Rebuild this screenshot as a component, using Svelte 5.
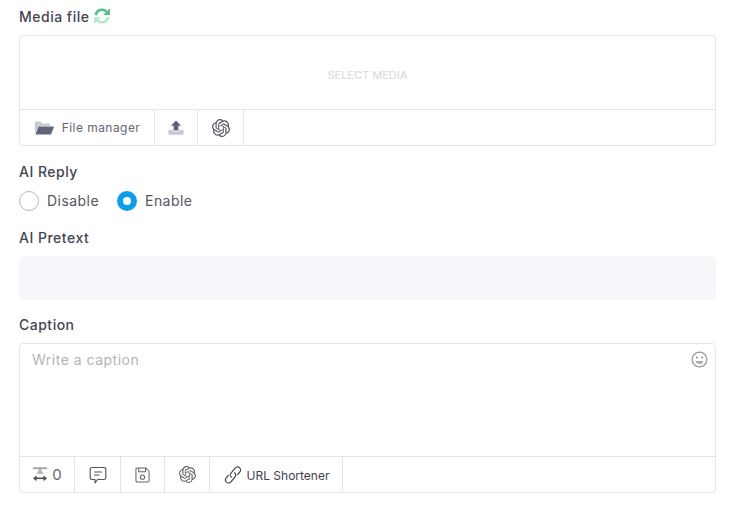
<script>
  const openai = "M22.2819 9.8211a5.9847 5.9847 0 0 0-.5157-4.9108 6.0462 6.0462 0 0 0-6.5098-2.9A6.0651 6.0651 0 0 0 4.9807 4.1818a5.9847 5.9847 0 0 0-3.9977 2.9 6.0462 6.0462 0 0 0 .7427 7.0966 5.98 5.98 0 0 0 .511 4.9107 6.051 6.051 0 0 0 6.5146 2.9001A5.9847 5.9847 0 0 0 13.2599 24a6.0557 6.0557 0 0 0 5.7718-4.2058 5.9894 5.9894 0 0 0 3.9977-2.9001 6.0557 6.0557 0 0 0-.7475-7.0729zm-9.022 12.6081a4.4755 4.4755 0 0 1-2.8764-1.0408l.1419-.0804 4.7783-2.7582a.7948.7948 0 0 0 .3927-.6813v-6.7369l2.02 1.1686a.071.071 0 0 1 .038.052v5.5826a4.504 4.504 0 0 1-4.4945 4.4944zm-9.6607-4.1254a4.4708 4.4708 0 0 1-.5346-3.0137l.142.0852 4.783 2.7582a.7712.7712 0 0 0 .7806 0l5.8428-3.3685v2.3324a.0804.0804 0 0 1-.0332.0615L9.74 19.9502a4.4992 4.4992 0 0 1-6.1408-1.6464zM2.3408 7.8956a4.485 4.485 0 0 1 2.3655-1.9728V11.6a.7664.7664 0 0 0 .3879.6765l5.8144 3.3543-2.0201 1.1685a.0757.0757 0 0 1-.071 0l-4.8303-2.7865A4.504 4.504 0 0 1 2.3408 7.872zm16.5963 3.8558L13.1038 8.364 15.1192 7.2a.0757.0757 0 0 1 .071 0l4.8303 2.7913a4.4944 4.4944 0 0 1-.6765 8.1042v-5.6772a.79.79 0 0 0-.407-.667zm2.0107-3.0231l-.142-.0852-4.7735-2.7818a.7759.7759 0 0 0-.7854 0L9.409 9.2297V6.8974a.0662.0662 0 0 1 .0284-.0615l4.8303-2.7866a4.4992 4.4992 0 0 1 6.6802 4.66zM8.3065 12.863l-2.02-1.1638a.0804.0804 0 0 1-.038-.0567V6.0742a4.4992 4.4992 0 0 1 7.3757-3.4537l-.142.0805L8.704 5.459a.7948.7948 0 0 0-.3927.6813zm1.0976-2.3654l2.602-1.4998 2.6069 1.4998v2.9994l-2.5974 1.4997-2.6067-1.4997Z";
</script>

<div class="page">
  <div class="label first">Media file
    <svg class="refresh" viewBox="0 0 24 24" width="18" height="18" aria-hidden="true">
      <path fill="none" stroke="#55c088" stroke-width="3.4" d="M3.6 11A8.600 8.600 0 0 1 18.200 6.200"/>
      <path fill="#55c088" d="M22.500 1.500V10.500H13.500Z"/>
      <path fill="none" stroke="#b4e8cb" stroke-width="3.4" d="M20.400 13A8.600 8.600 0 0 1 5.800 17.800"/>
      <path fill="#b4e8cb" d="M1.500 22.500V13.500H10.500Z"/>
    </svg>
  </div>
  <div class="box media">
    <div class="area center">SELECT MEDIA</div>
    <div class="bar">
      <div class="cell fm">
        <svg viewBox="0 0 20 14" width="20" height="14" aria-hidden="true">
          <path fill="#c9cbd3" d="M1 12V1.6C1 1 1.4.6 2 .6h4.6l1.6 1.8H15c.6 0 1 .4 1 1V5H5L1 12Z"/>
          <path fill="#62647a" d="M4.6 5.600h14.600c.5 0 .8.4.6.8l-2.700 6.600c-.2.4-.5.6-.9.6H1.400Z"/>
        </svg>
        <span>File manager</span>
      </div>
      <div class="cell up">
        <svg viewBox="0 0 16 15" width="16" height="15" aria-hidden="true">
          <path fill="#c6c8d0" d="M.5 10h4.300v1.400h6.400V10h4.300v4c0 .4-.3.7-.7.7H1.200c-.4 0-.7-.3-.7-.7Z"/>
          <path fill="#62647a" d="M8 .4 13.200 5.800H10.400v4.600H5.600V5.800H2.800Z"/>
        </svg>
      </div>
      <div class="cell ai1">
        <svg viewBox="0 0 24 24" width="18" height="18" aria-hidden="true"><path fill="#55555f" d={openai}/></svg>
      </div>
    </div>
  </div>

  <div class="label reply">AI Reply</div>
  <div class="radios">
    <div class="radio"><span class="dot"></span>Disable</div>
    <div class="radio"><span class="dot on"></span>Enable</div>
  </div>

  <div class="label pre">AI Pretext</div>
  <div class="input"></div>

  <div class="label cap">Caption</div>
  <div class="box caption">
    <div class="area text">
      <span class="ph">Write a caption</span>
      <svg class="smile" viewBox="0 0 18 18" width="17" height="17" aria-hidden="true">
        <circle cx="9" cy="9" r="7.800" fill="none" stroke="#999" stroke-width="1.300"/>
        <circle cx="6.300" cy="7" r="1.100" fill="#999"/>
        <circle cx="11.700" cy="7" r="1.100" fill="#999"/>
        <path d="M4.800 10.600h8.400c-.4 2-2.100 3.200-4.200 3.200s-3.800-1.200-4.200-3.200Z" fill="#aaa"/>
      </svg>
    </div>
    <div class="bar">
      <div class="cell c1">
        <svg viewBox="0 0 16 15" width="16" height="15" aria-hidden="true">
          <path d="M1 1.200h14" stroke="#a5a6af" stroke-width="2" fill="none"/>
          <path d="M8 2v5" stroke="#a5a6af" stroke-width="2.600" fill="none"/>
          <path d="M3.800 6.400h8.400L8 2.400Z" fill="#b5b6be"/>
          <path d="M2 11.300h12" stroke="#4b4b55" stroke-width="1.500" fill="none"/>
          <path d="M4.600 8.400 1 11.300l3.600 2.900ZM11.400 8.400l3.600 2.900-3.600 2.900Z" fill="#4b4b55"/>
        </svg>
        <span class="num">0</span>
      </div>
      <div class="cell c2">
        <svg viewBox="0 0 18 18" width="18" height="18" aria-hidden="true" fill="none" stroke="#55555f" stroke-width="1.150" stroke-linejoin="round" stroke-linecap="round">
          <path d="M3 1.500h12A1.800 1.800 0 0 1 16.800 3.300v8.400a1.800 1.800 0 0 1-1.800 1.800H8.600L6 16.800v-3.300H3a1.800 1.800 0 0 1-1.800-1.800V3.300A1.800 1.800 0 0 1 3 1.500Z"/>
          <path d="M5.500 6h7M5.500 9h4.500"/>
        </svg>
      </div>
      <div class="cell c3">
        <svg viewBox="0 0 16 17" width="15" height="16" aria-hidden="true" fill="none" stroke="#62626c" stroke-width="1.100" stroke-linejoin="round">
          <path d="M2.200 1h9.300L15 4.500v9.800c0 .9-.7 1.700-1.600 1.700H2.600c-.9 0-1.600-.8-1.600-1.700V2.200C1 1.500 1.500 1 2.200 1Z"/>
          <path d="M4 1v4h7.200V1"/>
          <circle cx="8" cy="10.800" r="2.200"/>
        </svg>
      </div>
      <div class="cell c4">
        <svg viewBox="0 0 24 24" width="17" height="17" aria-hidden="true"><path fill="#62626c" d={openai}/></svg>
      </div>
      <div class="cell c5">
        <svg viewBox="0 0 20 20" width="20" height="20" aria-hidden="true" fill="none" stroke="#3f3f49" stroke-width="1.150" stroke-linecap="round">
          <path d="M8.500 12.200C7 11.200 6.900 9.300 8 8.100l3.900-4.800c1.200-1.500 3.200-1.800 4.500-.7s1.400 3.100.3 4.500l-2 2.500"/>
          <path d="M11.500 7.800C13 8.800 13.100 10.700 12 11.900l-3.900 4.800c-1.200 1.500-3.200 1.800-4.500.7s-1.400-3.100-.3-4.500l2-2.500"/>
        </svg>
        <span class="url">URL Shortener</span>
      </div>
    </div>
  </div>
</div>

<style>
  :global(body) { margin: 0; background: #fff; }
  .page {
    width: 697px;
    height: 518px;
    padding-left: 19px;
    overflow: hidden;
    font-family: Inter, "Open Sans", sans-serif;
    color: #3f3f4b;
  }
  .label {
    font-size: 14px;
    font-weight: 500;
    line-height: 20px;
    color: #444452;
    display: flex;
    align-items: center;
    gap: 3px;
    letter-spacing: 0.5px;
  }
  .first { padding-top: 7px; margin-bottom: 8px; }
  .reply { margin-top: 16px; }
  .pre { margin-top: 17px; }
  .cap { margin-top: 15px; }
  .refresh { margin-top: -2px; }
  .box {
    box-sizing: border-box;
    border: 1px solid #e3e4e8;
    border-radius: 4px;
    display: flex;
    flex-direction: column;
  }
  .media { height: 111px; }
  .caption { height: 150px; margin-top: 8px; }
  .area { flex: 1; }
  .center {
    display: flex;
    align-items: center;
    justify-content: center;
    font-size: 11px;
    font-weight: 500;
    color: #dcdde1;
    padding-top: 4px;
    box-sizing: border-box;
  }
  .text {
    display: flex;
    justify-content: space-between;
    padding: 6px 7px 0 12px;
  }
  .smile { margin-top: 1px; }
  .ph { font-size: 14px; color: #b3b4bb; line-height: 20px; letter-spacing: 0.5px; }
  .bar {
    box-sizing: border-box;
    height: 36px;
    flex: none;
    border-top: 1px solid #e3e4e8;
    display: flex;
  }
  .cell {
    box-sizing: border-box;
    border-right: 1px solid #e3e4e8;
    display: flex;
    align-items: center;
    justify-content: center;
    font-size: 12px;
    color: #666672;
  }
  .fm { width: 135px; gap: 8px; letter-spacing: 0.45px; }
  .up { width: 43px; }
  .ai1 { width: 46px; }
  .c1 { width: 55px; gap: 4px; }
  .num { font-size: 15px; color: #666672; }
  .c2 { width: 46px; }
  .c3 { width: 44px; }
  .c4 { width: 45px; }
  .c5 { width: 133px; gap: 4px; color: #3f3f4b; font-size: 12px; }
  .url { margin-top: 1px; }
  .radios {
    display: flex;
    gap: 18px;
    margin-top: 9px;
  }
  .radio {
    display: flex;
    align-items: center;
    gap: 8px;
    font-size: 14px;
    line-height: 20px;
    letter-spacing: 0.45px;
    color: #55555f;
  }
  .dot {
    width: 20px;
    height: 20px;
    box-sizing: border-box;
    border: 1px solid #b5b5b5;
    border-radius: 50%;
    background: #fff;
  }
  .dot.on { border: 6px solid #0d9eea; }
  .input {
    height: 44px;
    margin-top: 8px;
    background: #f4f6f9;
    border-radius: 6px;
  }
</style>
